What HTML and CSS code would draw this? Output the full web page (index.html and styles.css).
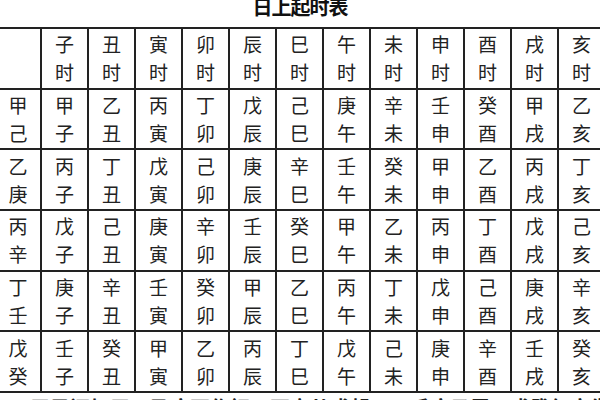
FILE: index.html
```html
<!DOCTYPE html>
<html lang="zh">
<head>
<meta charset="utf-8">
<title>日上起时表</title>
<link rel="stylesheet" href="styles.css">
</head>
<body>
<div class="page">
  <h1 class="title">日上起时表</h1>
  <table class="grid">
    <colgroup>
      <col class="c0"><col><col><col><col><col><col><col><col><col><col><col><col>
    </colgroup>
    <tbody>
      <tr class="head">
        <td class="first"></td>
        <td>子<br>时</td><td>丑<br>时</td><td>寅<br>时</td><td>卯<br>时</td><td>辰<br>时</td><td>巳<br>时</td>
        <td>午<br>时</td><td>未<br>时</td><td>申<br>时</td><td>酉<br>时</td><td>戌<br>时</td><td>亥<br>时</td>
      </tr>
      <tr>
        <td class="first">甲<br>己</td>
        <td>甲<br>子</td><td>乙<br>丑</td><td>丙<br>寅</td><td>丁<br>卯</td><td>戊<br>辰</td><td>己<br>巳</td>
        <td>庚<br>午</td><td>辛<br>未</td><td>壬<br>申</td><td>癸<br>酉</td><td>甲<br>戌</td><td>乙<br>亥</td>
      </tr>
      <tr>
        <td class="first">乙<br>庚</td>
        <td>丙<br>子</td><td>丁<br>丑</td><td>戊<br>寅</td><td>己<br>卯</td><td>庚<br>辰</td><td>辛<br>巳</td>
        <td>壬<br>午</td><td>癸<br>未</td><td>甲<br>申</td><td>乙<br>酉</td><td>丙<br>戌</td><td>丁<br>亥</td>
      </tr>
      <tr>
        <td class="first">丙<br>辛</td>
        <td>戊<br>子</td><td>己<br>丑</td><td>庚<br>寅</td><td>辛<br>卯</td><td>壬<br>辰</td><td>癸<br>巳</td>
        <td>甲<br>午</td><td>乙<br>未</td><td>丙<br>申</td><td>丁<br>酉</td><td>戊<br>戌</td><td>己<br>亥</td>
      </tr>
      <tr>
        <td class="first">丁<br>壬</td>
        <td>庚<br>子</td><td>辛<br>丑</td><td>壬<br>寅</td><td>癸<br>卯</td><td>甲<br>辰</td><td>乙<br>巳</td>
        <td>丙<br>午</td><td>丁<br>未</td><td>戊<br>申</td><td>己<br>酉</td><td>庚<br>戌</td><td>辛<br>亥</td>
      </tr>
      <tr>
        <td class="first">戊<br>癸</td>
        <td>壬<br>子</td><td>癸<br>丑</td><td>甲<br>寅</td><td>乙<br>卯</td><td>丙<br>辰</td><td>丁<br>巳</td>
        <td>戊<br>午</td><td>己<br>未</td><td>庚<br>申</td><td>辛<br>酉</td><td>壬<br>戌</td><td>癸<br>亥</td>
      </tr>
    </tbody>
  </table>
  <p class="note">甲己还加甲，乙庚丙作初，丙辛从戊起，丁壬庚子居，戊癸何方发，壬子是真途。</p>
</div>
</body>
</html>
```
FILE: styles.css
```css
html, body {
  margin: 0;
  padding: 0;
  background: #ffffff;
}
body {
  width: 600px;
  height: 400px;
  overflow: hidden;
  font-family: "Noto Sans CJK SC", "Noto Sans", sans-serif;
  color: #2e2e2e;
}
.page {
  display: flex;
  flex-direction: column;
  align-items: flex-start;
}
.title {
  align-self: center;
  margin: -3px 0 0 0;
  height: 30px;
  font-size: 20px;
  line-height: 20px;
  font-weight: 700;
  color: #111;
  letter-spacing: -1px;
}
.grid {
  margin-left: -6px;
  border-collapse: collapse;
  table-layout: fixed;
  width: 610px;
}
.grid col {
  width: 47px;
}
.grid col.c0 {
  width: 46px;
}
.grid td {
  border: 2px solid #222;
  height: 58.7px;
  padding: 0;
  text-align: center;
  vertical-align: middle;
  font-size: 19px;
  line-height: 28px;
  color: #222;
}
.note {
  margin: 3px 0 0 30px;
  font-size: 20px;
  font-weight: 700;
  line-height: 24px;
  color: #222;
  white-space: nowrap;
}
```
